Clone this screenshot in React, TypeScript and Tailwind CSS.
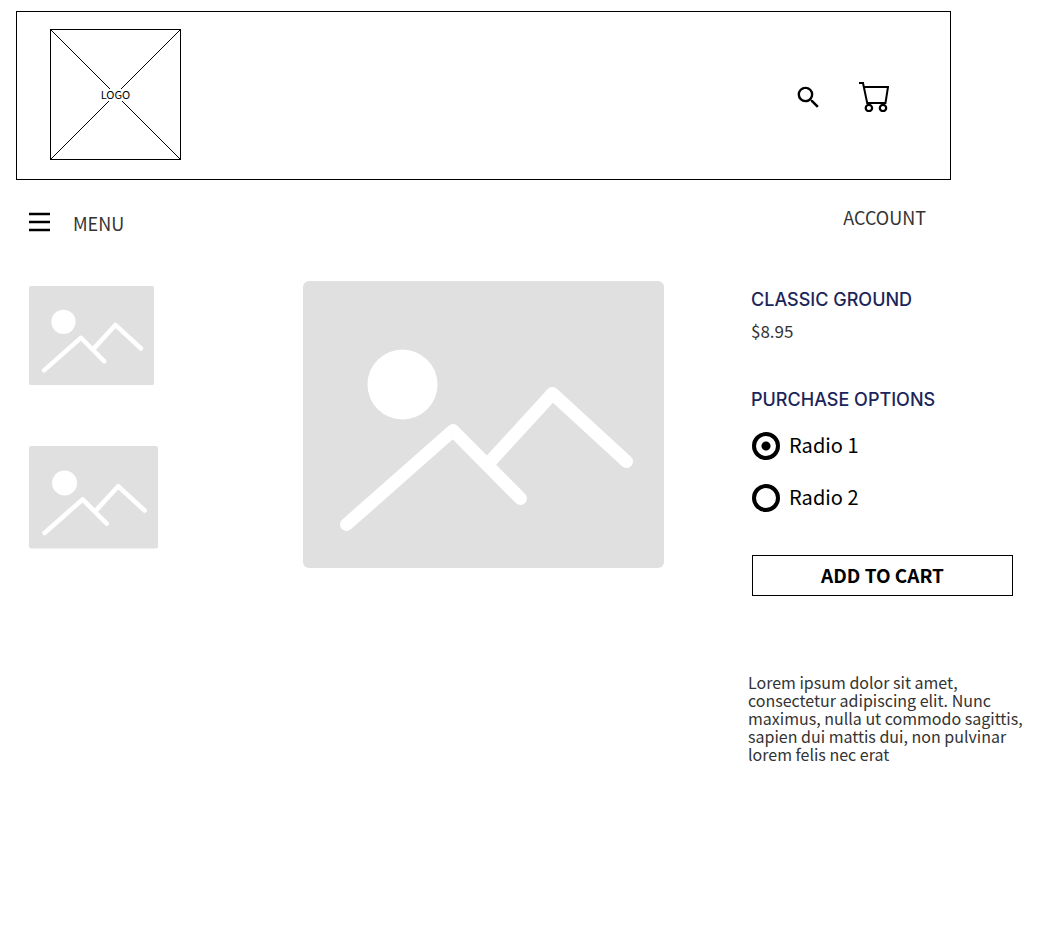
import { useState } from "react";
import { MdSearch } from "react-icons/md";

function ImagePlaceholder({ label, className }: { label: string; className: string }) {
  return (
    <svg viewBox="0 0 361 287" role="img" aria-label={label} className={className}>
      <rect width="361" height="287" rx="6" fill="#e0e0e0" />
      <circle cx="99.5" cy="103.5" r="35" fill="#fff" />
      <g fill="none" stroke="#fff" strokeWidth="13" strokeLinecap="round" strokeLinejoin="round">
        <path d="M43.5 243.5 150 149.5 217.5 217.5" />
        <path d="M185 183 249.5 112.5 323.5 180.5" />
      </g>
    </svg>
  );
}

function Logo() {
  return (
    <svg viewBox="0 0 131 131" role="img" aria-label="Logo" className="size-[131px]">
      <rect x="0.5" y="0.5" width="130" height="130" fill="#fff" stroke="#000" />
      <path d="M1 1 130 130M130 1 1 130" stroke="#000" fill="none" />
      <rect x="50" y="60" width="31" height="12" fill="#fff" />
      <text
        x="65.5"
        y="70"
        textAnchor="middle"
        className="font-['Noto_Sans_CJK_SC',sans-serif] text-[11px]"
      >
        LOGO
      </text>
    </svg>
  );
}

function CartIcon() {
  return (
    <svg viewBox="0 0 30 30" fill="none" stroke="#000" strokeWidth="2" className="size-[30px]" aria-hidden="true">
      <path d="M0 1H4L8.2 21H26.5L29 5H5" />
      <circle cx="9.9" cy="26" r="3.2" strokeWidth="2.2" />
      <circle cx="24" cy="26" r="3.2" strokeWidth="2.2" />
    </svg>
  );
}

export default function App() {
  const [option, setOption] = useState("1");

  return (
    <div className="min-h-screen bg-white pt-[11px] pl-4 font-['Noto_Sans_CJK_SC',sans-serif] text-black">
      <header className="mr-[108px] flex items-center justify-between border border-black pt-[17px] pr-[61px] pb-[19px] pl-[33px]">
        <Logo />
        <div className="flex items-center gap-9 pt-[5px]">
          <button type="button" aria-label="Search">
            <MdSearch className="size-[29px]" />
          </button>
          <button type="button" aria-label="Cart">
            <CartIcon />
          </button>
        </div>
      </header>

      <nav className="mr-[133px] ml-[13px] flex items-start justify-between pt-6 text-[18px] leading-[26px] text-[#333]">
        <button type="button" className="flex items-start gap-[23px] pt-[6px]">
          <svg viewBox="0 0 21 28" className="h-7 w-[21px]" aria-hidden="true">
            <path d="M0 4h21M0 12h21M0 20h21" stroke="#000" strokeWidth="2.5" />
          </svg>
          MENU
        </button>
        <a href="#account">ACCOUNT</a>
      </nav>

      <main className="ml-[13px] grid grid-cols-[129px_1fr_276px] pt-[43px] pr-[35px]">
        <div className="flex flex-col items-start gap-[61px] pt-[5px]">
          <ImagePlaceholder label="Product thumbnail 1" className="w-[125px]" />
          <ImagePlaceholder label="Product thumbnail 2" className="w-[129px]" />
        </div>

        <div className="pr-[84px] pl-[145px]">
          <ImagePlaceholder label="Product" className="w-full" />
        </div>

        <section className="pl-[3px]">
          <h1 className="pt-[5px] font-['Inter',sans-serif] text-[18px] leading-7 font-medium text-[#1b2559]">
            CLASSIC GROUND
          </h1>
          <p className="pt-[3px] text-[17px] leading-7 text-[#333]">$8.95</p>
          <fieldset className="pt-[41px]">
            <legend className="contents font-['Inter',sans-serif] text-[18px] leading-7 font-medium text-[#1b2559]">
              PURCHASE OPTIONS
            </legend>
            <div className="flex flex-col items-start gap-6 pt-[18px]">
              {["1", "2"].map((value) => (
                <label key={value} className="flex items-start gap-[9px] text-[20px] leading-[25px]">
                  <input
                    type="radio"
                    name="purchase"
                    value={value}
                    checked={option === value}
                    onChange={() => setOption(value)}
                    className="ml-px size-7 appearance-none rounded-full border-4 border-black bg-white checked:bg-[radial-gradient(circle,#000_4px,#fff_5px)]"
                  />
                  Radio {value}
                </label>
              ))}
            </div>
          </fieldset>
          <button
            type="button"
            className="mt-[43px] ml-px flex h-[41px] w-[261px] items-center justify-center border border-black pb-[2px] text-[19px] leading-7 font-bold"
          >
            ADD TO CART
          </button>
          <p className="-mr-3 -ml-[3px] pt-[77px] text-[16px] leading-[18px] text-[#333]">
            Lorem ipsum dolor sit amet, consectetur adipiscing elit. Nunc maximus, nulla ut commodo
            sagittis, sapien dui mattis dui, non pulvinar lorem felis nec erat
          </p>
        </section>
      </main>
    </div>
  );
}
